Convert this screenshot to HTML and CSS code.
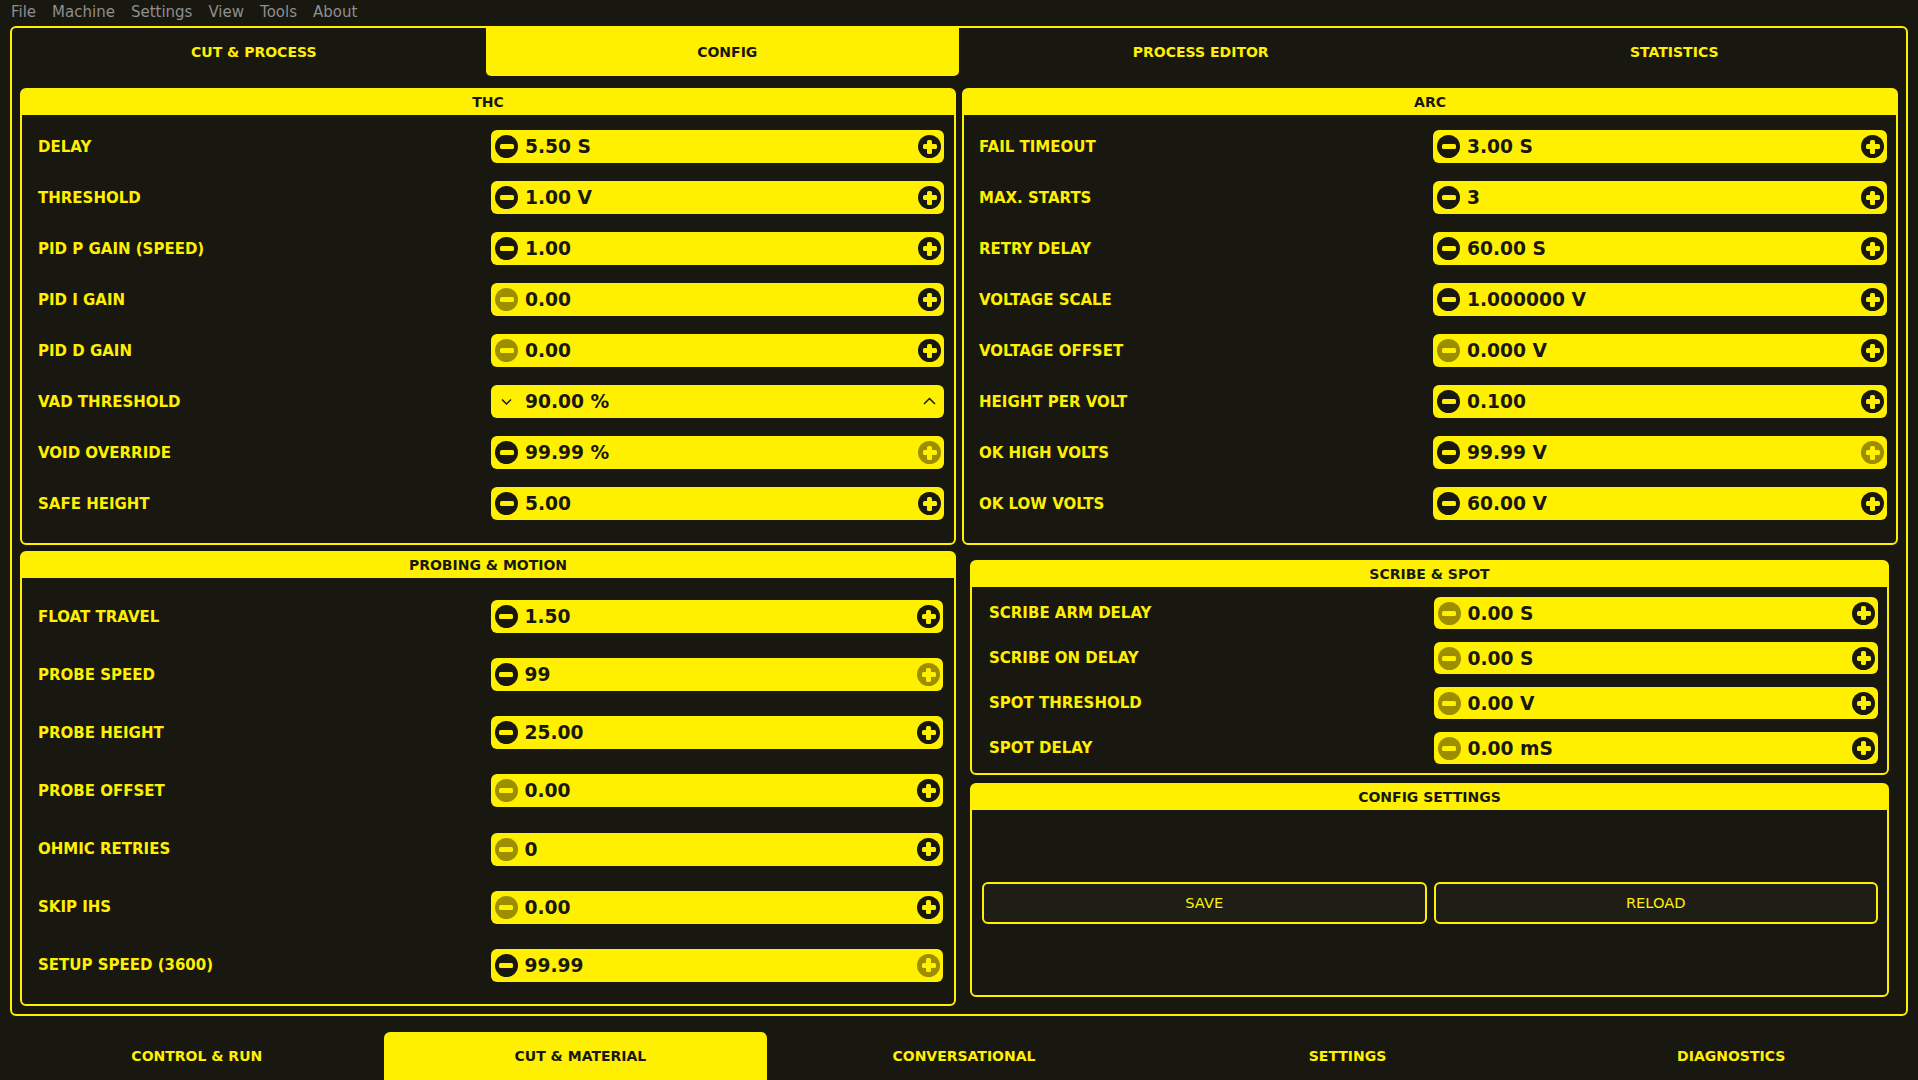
FILE: index.html
```html
<!DOCTYPE html>
<html lang="en">
<head>
    <meta charset="UTF-8">
    <title>Plasma - Config</title>
    <link rel="stylesheet" href="styles.css">
</head>
<body>
    <div class="menubar">
        <span>File</span><span>Machine</span><span>Settings</span><span>View</span><span>Tools</span><span>About</span>
    </div>

    <div class="frame">
        <div class="tabs">
            <div class="tab">CUT &amp; PROCESS</div>
            <div class="tab active">CONFIG</div>
            <div class="tab">PROCESS EDITOR</div>
            <div class="tab">STATISTICS</div>
        </div>

        <div class="content">
            <!-- THC -->
            <section class="panel">
                <div class="panel-title">THC</div>
                <div class="rows rows-thc">
                    <div class="field"><span class="label">DELAY</span><div class="spin"><i class="step"></i><span class="value">5.50 S</span><i class="step plus"></i></div></div>
                    <div class="field"><span class="label">THRESHOLD</span><div class="spin"><i class="step"></i><span class="value">1.00 V</span><i class="step plus"></i></div></div>
                    <div class="field"><span class="label">PID P GAIN (SPEED)</span><div class="spin"><i class="step"></i><span class="value">1.00</span><i class="step plus"></i></div></div>
                    <div class="field"><span class="label">PID I GAIN</span><div class="spin"><i class="step off"></i><span class="value">0.00</span><i class="step plus"></i></div></div>
                    <div class="field"><span class="label">PID D GAIN</span><div class="spin"><i class="step off"></i><span class="value">0.00</span><i class="step plus"></i></div></div>
                    <div class="field"><span class="label">VAD THRESHOLD</span>
                        <div class="spin">
                            <svg class="chev" width="23" height="23" viewBox="0 0 23 23"><polyline points="7,9.5 11.5,14 16,9.5"/></svg>
                            <span class="value">90.00 %</span>
                            <svg class="chev" width="23" height="23" viewBox="0 0 23 23"><polyline points="6,14 11.5,8.5 17,14"/></svg>
                        </div>
                    </div>
                    <div class="field"><span class="label">VOID OVERRIDE</span><div class="spin"><i class="step"></i><span class="value">99.99 %</span><i class="step plus off"></i></div></div>
                    <div class="field"><span class="label">SAFE HEIGHT</span><div class="spin"><i class="step"></i><span class="value">5.00</span><i class="step plus"></i></div></div>
                </div>
            </section>

            <!-- ARC -->
            <section class="panel">
                <div class="panel-title">ARC</div>
                <div class="rows rows-thc rows-arc">
                    <div class="field"><span class="label">FAIL TIMEOUT</span><div class="spin"><i class="step"></i><span class="value">3.00 S</span><i class="step plus"></i></div></div>
                    <div class="field"><span class="label">MAX. STARTS</span><div class="spin"><i class="step"></i><span class="value">3</span><i class="step plus"></i></div></div>
                    <div class="field"><span class="label">RETRY DELAY</span><div class="spin"><i class="step"></i><span class="value">60.00 S</span><i class="step plus"></i></div></div>
                    <div class="field"><span class="label">VOLTAGE SCALE</span><div class="spin"><i class="step"></i><span class="value">1.000000 V</span><i class="step plus"></i></div></div>
                    <div class="field"><span class="label">VOLTAGE OFFSET</span><div class="spin"><i class="step off"></i><span class="value">0.000 V</span><i class="step plus"></i></div></div>
                    <div class="field"><span class="label">HEIGHT PER VOLT</span><div class="spin"><i class="step"></i><span class="value">0.100</span><i class="step plus"></i></div></div>
                    <div class="field"><span class="label">OK HIGH VOLTS</span><div class="spin"><i class="step"></i><span class="value">99.99 V</span><i class="step plus off"></i></div></div>
                    <div class="field"><span class="label">OK LOW VOLTS</span><div class="spin"><i class="step"></i><span class="value">60.00 V</span><i class="step plus"></i></div></div>
                </div>
            </section>

            <!-- PROBING & MOTION -->
            <section class="panel">
                <div class="panel-title">PROBING &amp; MOTION</div>
                <div class="rows rows-probe">
                    <div class="field"><span class="label">FLOAT TRAVEL</span><div class="spin"><i class="step"></i><span class="value">1.50</span><i class="step plus"></i></div></div>
                    <div class="field"><span class="label">PROBE SPEED</span><div class="spin"><i class="step"></i><span class="value">99</span><i class="step plus off"></i></div></div>
                    <div class="field"><span class="label">PROBE HEIGHT</span><div class="spin"><i class="step"></i><span class="value">25.00</span><i class="step plus"></i></div></div>
                    <div class="field"><span class="label">PROBE OFFSET</span><div class="spin"><i class="step off"></i><span class="value">0.00</span><i class="step plus"></i></div></div>
                    <div class="field"><span class="label">OHMIC RETRIES</span><div class="spin"><i class="step off"></i><span class="value">0</span><i class="step plus"></i></div></div>
                    <div class="field"><span class="label">SKIP IHS</span><div class="spin"><i class="step off"></i><span class="value">0.00</span><i class="step plus"></i></div></div>
                    <div class="field"><span class="label">SETUP SPEED (3600)</span><div class="spin"><i class="step"></i><span class="value">99.99</span><i class="step plus off"></i></div></div>
                </div>
            </section>

            <div class="stack">
                <!-- SCRIBE & SPOT -->
                <section class="panel panel-scribe">
                    <div class="panel-title">SCRIBE &amp; SPOT</div>
                    <div class="rows rows-scribe">
                        <div class="field"><span class="label">SCRIBE ARM DELAY</span><div class="spin"><i class="step off"></i><span class="value">0.00 S</span><i class="step plus"></i></div></div>
                        <div class="field"><span class="label">SCRIBE ON DELAY</span><div class="spin"><i class="step off"></i><span class="value">0.00 S</span><i class="step plus"></i></div></div>
                        <div class="field"><span class="label">SPOT THRESHOLD</span><div class="spin"><i class="step off"></i><span class="value">0.00 V</span><i class="step plus"></i></div></div>
                        <div class="field"><span class="label">SPOT DELAY</span><div class="spin"><i class="step off"></i><span class="value">0.00 mS</span><i class="step plus"></i></div></div>
                    </div>
                </section>

                <!-- CONFIG SETTINGS -->
                <section class="panel panel-config">
                    <div class="panel-title">CONFIG SETTINGS</div>
                    <div class="buttons">
                        <button class="btn">SAVE</button>
                        <button class="btn">RELOAD</button>
                    </div>
                </section>
            </div>
        </div>
    </div>

    <div class="tabs tabs-bottom">
        <div class="tab">CONTROL &amp; RUN</div>
        <div class="tab active">CUT &amp; MATERIAL</div>
        <div class="tab">CONVERSATIONAL</div>
        <div class="tab">SETTINGS</div>
        <div class="tab">DIAGNOSTICS</div>
    </div>
</body>
</html>
```

FILE: styles.css
```css
* {
    margin: 0;
    padding: 0;
    box-sizing: border-box;
}

body {
    font-family: 'DejaVu Sans', 'Liberation Sans', sans-serif;
    background: #181710;
    color: #fff000;
    width: 1918px;
    height: 1080px;
    overflow: hidden;
}

/* Menu bar */
.menubar {
    height: 26px;
    line-height: 25px;
    padding-left: 3px;
    font-size: 15px;
    color: #8e8e8e;
    display: flex;
}

.menubar span {
    padding: 0 8px;
}

/* Main tab frame */
.frame {
    margin: 0 10px;
    border: 2px solid #fff000;
    border-radius: 6px;
}

.tabs {
    display: flex;
    height: 48px;
}

.tab {
    flex: 1;
    display: flex;
    align-items: center;
    justify-content: center;
    padding-left: 10px;
    font-size: 14px;
    font-weight: bold;
    color: #fff000;
}

.tab.active {
    background: #fff000;
    color: #181710;
    border-radius: 0 0 5px 5px;
}

.tabs-bottom {
    margin-top: 16px;
}

.tabs-bottom .tab.active {
    border-radius: 6px 6px 0 0;
}

.content {
    display: grid;
    grid-template-columns: 1fr 1fr;
    grid-template-rows: 457px 455px;
    gap: 6px;
    padding: 12px 8px 8px 8px;
}

/* Group panels */
.panel {
    border: 2px solid #fff000;
    border-radius: 6px;
    display: flex;
    flex-direction: column;
}

.panel-title {
    height: 25px;
    background: #fff000;
    color: #181710;
    font-size: 14px;
    font-weight: bold;
    text-align: center;
    line-height: 24px;
}

.rows {
    flex: 1;
    display: flex;
    flex-direction: column;
    justify-content: space-between;
    padding: 15px 10px 23px 16px;
}

.rows-arc {
    padding-left: 15px;
    padding-right: 9px;
}

.rows-probe {
    padding: 22px 11px 22px 16px;
}

.rows-scribe {
    padding: 10px 9px 9px 17px;
}

.field {
    display: grid;
    grid-template-columns: 1fr 1fr;
    align-items: center;
}

.label {
    font-size: 15px;
    font-weight: bold;
    color: #fff000;
}

/* Spin box */
.spin {
    height: 33px;
    background: #fff000;
    border-radius: 6px;
    display: flex;
    align-items: center;
    padding: 0 3px 0 4px;
    color: #181710;
}

.rows-scribe .spin {
    height: 32px;
}

.value {
    flex: 1;
    padding-left: 7px;
    font-size: 18.67px;
    font-weight: bold;
}

.step {
    width: 23px;
    height: 23px;
    border-radius: 50%;
    background: #181710;
    position: relative;
    flex-shrink: 0;
}

.step.off {
    background: #9c8e00;
}

.step::before,
.step.plus::after {
    content: "";
    position: absolute;
    background: #fff000;
    border-radius: 1.5px;
}

.step::before {
    left: 4.5px;
    top: 9px;
    width: 14px;
    height: 5px;
}

.step.plus::after {
    left: 9px;
    top: 4.5px;
    width: 5px;
    height: 14px;
}

.chev {
    flex-shrink: 0;
}

.chev polyline {
    fill: none;
    stroke: #181710;
    stroke-width: 1.5;
}

/* Right bottom stack */
.stack {
    display: flex;
    flex-direction: column;
    gap: 8px;
    padding: 9px 9px 9px 8px;
}

.panel-scribe {
    height: 215px;
}

.panel-config {
    flex: 1;
}

.buttons {
    flex: 1;
    display: flex;
    align-items: center;
    gap: 7px;
    padding: 0 9px 0 10px;
}

.btn {
    flex: 1;
    height: 42px;
    background: #1e1d16;
    border: 2px solid #fff000;
    border-radius: 6px;
    color: #fff000;
    font-family: inherit;
    font-size: 14.67px;
}
```
